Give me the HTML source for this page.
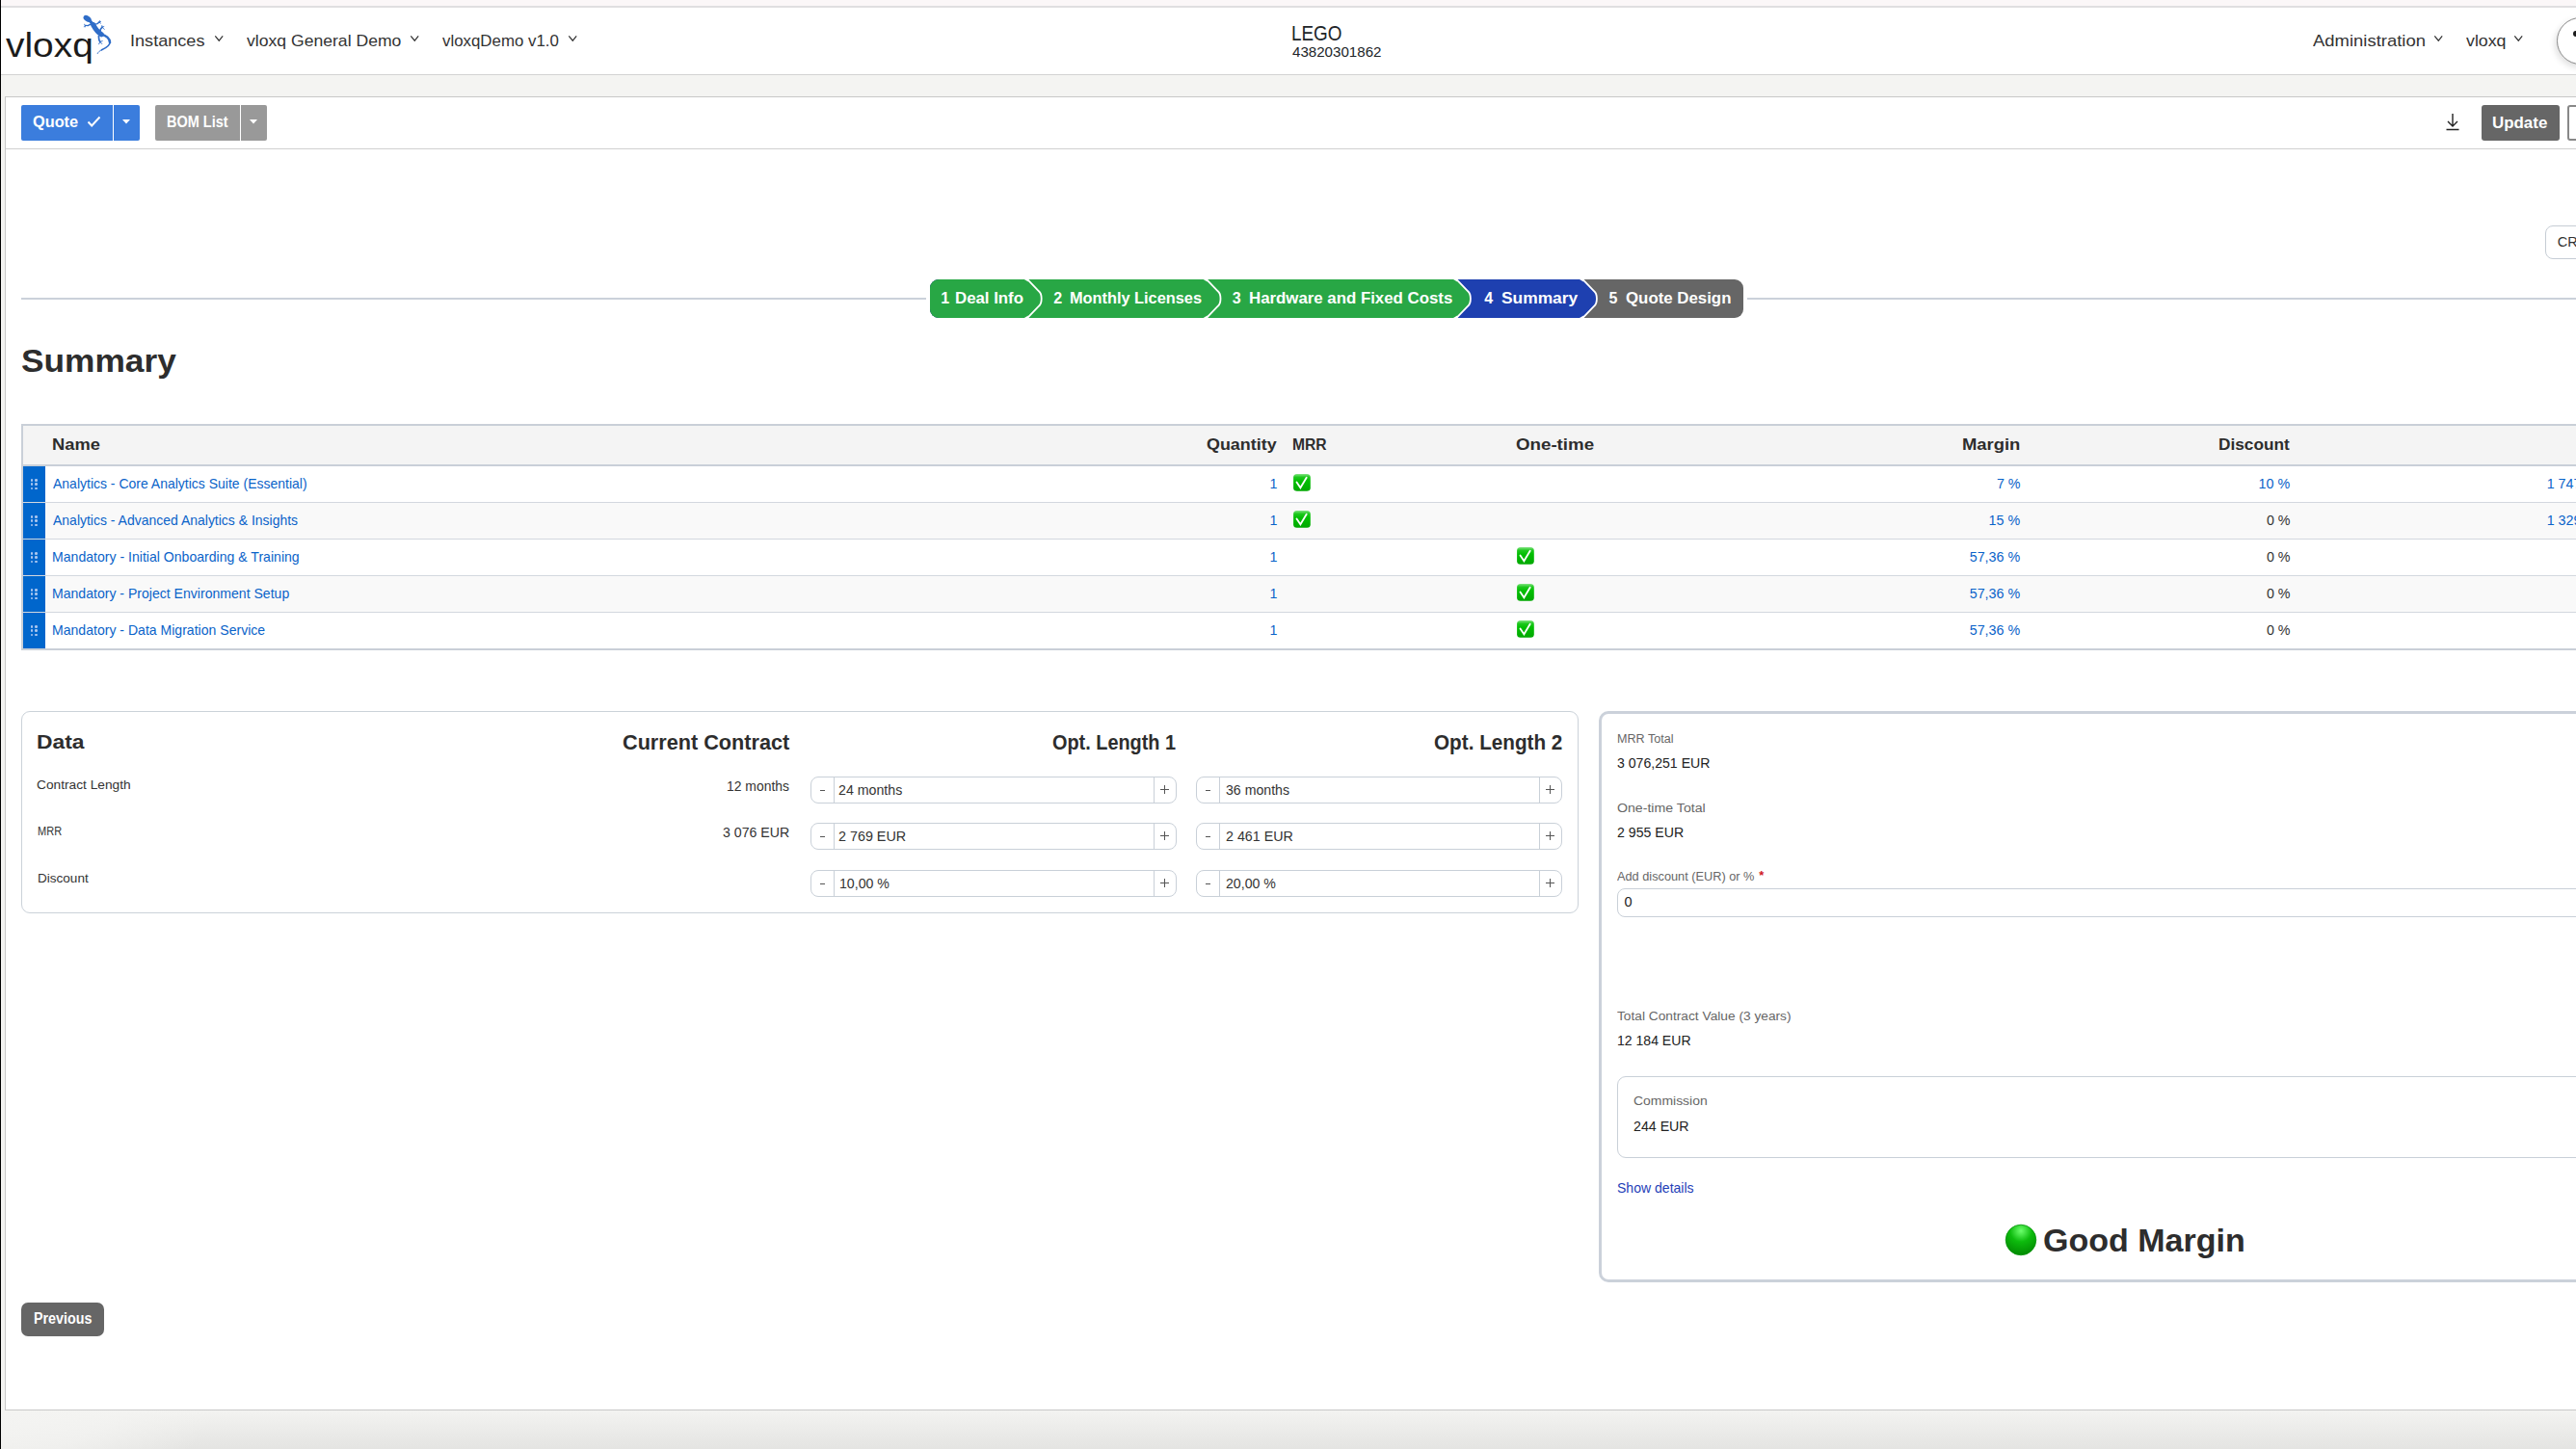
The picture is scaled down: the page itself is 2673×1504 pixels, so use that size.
<!DOCTYPE html>
<html><head><meta charset="utf-8"><title>vloxq Summary</title>
<style>
html,body{margin:0;padding:0;}
body{width:2673px;height:1504px;position:relative;overflow:hidden;background:#fff;font-family:'Liberation Sans', sans-serif;}
.t{position:absolute;white-space:nowrap;transform-origin:0 0;}
</style></head><body>
<div style="position:absolute;left:0;top:0;width:2673px;height:6px;background:#fbf7f8"></div>
<div style="position:absolute;left:0;top:6px;width:2673px;height:2px;background:#e0dfe0"></div>
<div style="position:absolute;left:0;top:77px;width:2673px;height:1px;background:#d2d2d2"></div>
<div style="position:absolute;left:0;top:78px;width:2673px;height:22px;background:#f4f4f2"></div>
<div style="position:absolute;left:0;top:78px;width:5px;height:1426px;background:#f3f3f1"></div>
<div style="position:absolute;left:0;top:1464px;width:2673px;height:40px;background:linear-gradient(180deg,#f3f3f1 0%,#e4e4e2 100%)"></div>
<div style="position:absolute;left:0;top:1464px;width:400px;height:40px;background:radial-gradient(ellipse 220px 90px at 0 0,rgba(244,244,242,1) 0%,rgba(244,244,242,0.7) 50%,rgba(244,244,242,0) 100%)"></div>
<div style="position:absolute;left:5px;top:100px;width:2700px;height:1364px;border:1px solid #c8c8c8;background:#fff;box-sizing:border-box"></div>
<div style="position:absolute;left:6px;top:154px;width:2667px;height:1px;background:#d0d0d0"></div>
<div style="position:absolute;left:0;top:0;width:1px;height:1504px;background:#000"></div>
<svg style="position:absolute;left:80px;top:10px" width="45" height="50" viewBox="80 10 45 50">
<g fill="none" stroke="#2f6dc8" stroke-linecap="round" stroke-linejoin="round">
<ellipse cx="90.6" cy="19.4" rx="4.5" ry="2.8" transform="rotate(34 90.6 19.4)" fill="#2f6dc8" stroke="none"/>
<path d="M93.2 21.4 L96.6 25.6" stroke-width="3.2"/>
<path d="M96.6 25.6 C98.6 29.2 100.6 33 105.2 35.7" stroke-width="5.2"/>
<path d="M105 35.8 C110 36.8 113.8 40 114 44" stroke-width="2.6"/>
<path d="M114 44 C114 48 109.5 50 105.5 51.8" stroke-width="1.6"/>
<path d="M105.5 51.8 C103.5 52.8 101.8 54 101.2 55.6" stroke-width="0.9"/>
<path d="M95 24.6 L91.2 26.6 L88.6 26.4" stroke-width="1.4"/>
<path d="M88.6 26.4 L87.4 25.2 M88.6 26.4 L87.2 27.4 M88.6 26.4 L88.2 28" stroke-width="0.9"/>
<path d="M97.6 25.4 L101 24.6 L103 23" stroke-width="1.4"/>
<path d="M103 23 L103.4 21.6 M103 23 L104.6 22.6 M103 23 L104.4 24.2" stroke-width="0.9"/>
<path d="M103.4 34 L104.4 30.2 L106 28.2" stroke-width="1.7"/>
<path d="M106 28.2 L105.8 26.6 M106 28.2 L107.8 27.6 M106 28.2 L108.2 30.4" stroke-width="0.9"/>
<path d="M102.4 37.6 L102.8 41.4 L103.8 43.4" stroke-width="1.7"/>
<path d="M103.8 43.4 L106.2 42.6 M103.8 43.4 L105.8 45.6 M103.8 43.4 L102.6 45.8" stroke-width="0.9"/>
</g></svg>
<svg style="position:absolute;left:222px;top:36.3px" width="10.5" height="7.5" viewBox="-1 -1 10.5 7.5"><path d="M0.3 0.3 L4.25 5.2 L8.2 0.3" fill="none" stroke="#333" stroke-width="1.2"/></svg>
<svg style="position:absolute;left:425px;top:36.3px" width="10.5" height="7.5" viewBox="-1 -1 10.5 7.5"><path d="M0.3 0.3 L4.25 5.2 L8.2 0.3" fill="none" stroke="#333" stroke-width="1.2"/></svg>
<svg style="position:absolute;left:589px;top:36.3px" width="10.5" height="7.5" viewBox="-1 -1 10.5 7.5"><path d="M0.3 0.3 L4.25 5.2 L8.2 0.3" fill="none" stroke="#333" stroke-width="1.2"/></svg>
<svg style="position:absolute;left:2524.5px;top:36.3px" width="10.5" height="7.5" viewBox="-1 -1 10.5 7.5"><path d="M0.3 0.3 L4.25 5.2 L8.2 0.3" fill="none" stroke="#333" stroke-width="1.2"/></svg>
<svg style="position:absolute;left:2607.5px;top:36.3px" width="10.5" height="7.5" viewBox="-1 -1 10.5 7.5"><path d="M0.3 0.3 L4.25 5.2 L8.2 0.3" fill="none" stroke="#333" stroke-width="1.2"/></svg>
<div style="position:absolute;left:2653px;top:18px;width:49px;height:49px;border-radius:50%;border:1px solid #8a8a8a;box-sizing:border-box;background:#fff;box-shadow:-2px 3px 6px rgba(0,0,0,0.12)"></div>
<div style="position:absolute;left:2669.5px;top:31.5px;width:6px;height:6.5px;border-radius:50%;background:#1b1b1b"></div>
<div style="position:absolute;left:22px;top:109px;width:123px;height:37px;background:#3b7ddd;border-radius:2px"></div>
<div style="position:absolute;left:117px;top:109px;width:1px;height:37px;background:#fff"></div>
<svg style="position:absolute;left:90px;top:120px" width="15" height="13" viewBox="0 0 15 13"><path d="M1.5 6.5 L5.2 10.5 L13.5 1.5" fill="none" stroke="#fff" stroke-width="1.9"/></svg>
<svg style="position:absolute;left:127px;top:123.5px" width="8" height="5" viewBox="0 0 8 5"><path d="M0 0 L8 0 L4 4.6 Z" fill="#fff"/></svg>
<div style="position:absolute;left:161px;top:109px;width:116px;height:37px;background:#999;border-radius:2px"></div>
<div style="position:absolute;left:249px;top:109px;width:1px;height:37px;background:#fff"></div>
<svg style="position:absolute;left:259px;top:124px" width="8" height="5" viewBox="0 0 8 5"><path d="M0 0 L8 0 L4 4.6 Z" fill="#fff"/></svg>
<svg style="position:absolute;left:2537px;top:117px" width="16" height="19" viewBox="0 0 16 19"><path d="M8 1 L8 14 M3 9 L8 14 L13 9 M1.5 17.5 L14.5 17.5" fill="none" stroke="#222" stroke-width="1.4"/></svg>
<div style="position:absolute;left:2574.5px;top:109px;width:81.5px;height:37px;background:#666;border-radius:3px"></div>
<div style="position:absolute;left:2664px;top:109px;width:30px;height:37px;border:2px solid #888;border-radius:3px;box-sizing:border-box;background:#fff"></div>
<div style="position:absolute;left:22px;top:309px;width:939px;height:2px;background:#cbd1da"></div>
<div style="position:absolute;left:1813px;top:309px;width:860px;height:2px;background:#cbd1da"></div>
<svg style="position:absolute;left:960px;top:285px" width="860" height="50" viewBox="960 285 860 50">
<defs><clipPath id="pill"><rect x="965" y="290" width="844" height="40" rx="9" ry="9"/></clipPath></defs>
<g clip-path="url(#pill)">
<rect x="960" y="285" width="860" height="50" fill="#666"/>
<path d="M960 285 L1641.4 285 L1641.4 289 L1654.2 302.3 C1657.8 305.2 1657.8 314.8 1654.2 317.7 L1641.4 331 L1641.4 335 L960 335 Z" fill="#1e40b0"/>
<path d="M960 285 L1510.4 285 L1510.4 289 L1523.2 302.3 C1526.8 305.2 1526.8 314.8 1523.2 317.7 L1510.4 331 L1510.4 335 L960 335 Z" fill="#28a745"/>
<path d="M1065.2 287 1065.2 289 L1078.0 302.3 C1081.6 305.2 1081.6 314.8 1078.0 317.7 L1065.2 331 L1065.2 333" fill="none" stroke="#fff" stroke-width="1.8"/><path d="M1062.2 289.6 L1066.4 289.6 L1067.0 292.6 Z M1062.2 330.4 L1066.4 330.4 L1067.0 327.4 Z" fill="#fff"/><path d="M1251.0 287 1251.0 289 L1263.8 302.3 C1267.4 305.2 1267.4 314.8 1263.8 317.7 L1251.0 331 L1251.0 333" fill="none" stroke="#fff" stroke-width="1.8"/><path d="M1248.0 289.6 L1252.2 289.6 L1252.8 292.6 Z M1248.0 330.4 L1252.2 330.4 L1252.8 327.4 Z" fill="#fff"/><path d="M1510.4 287 1510.4 289 L1523.2 302.3 C1526.8 305.2 1526.8 314.8 1523.2 317.7 L1510.4 331 L1510.4 333" fill="none" stroke="#fff" stroke-width="1.8"/><path d="M1507.4 289.6 L1511.6 289.6 L1512.2 292.6 Z M1507.4 330.4 L1511.6 330.4 L1512.2 327.4 Z" fill="#fff"/><path d="M1641.4 287 1641.4 289 L1654.2 302.3 C1657.8 305.2 1657.8 314.8 1654.2 317.7 L1641.4 331 L1641.4 333" fill="none" stroke="#fff" stroke-width="1.8"/><path d="M1638.4 289.6 L1642.6 289.6 L1643.2 292.6 Z M1638.4 330.4 L1642.6 330.4 L1643.2 327.4 Z" fill="#fff"/>
</g></svg>
<div style="position:absolute;left:2641px;top:234px;width:80px;height:35px;border:1px solid #c6cdd5;border-radius:8px;box-sizing:border-box;background:#fff"></div>
<div style="position:absolute;left:22px;top:440px;width:2700px;height:235px;border:2px solid #c9cfd8;box-sizing:border-box;background:#fff"></div>
<div style="position:absolute;left:24px;top:442px;width:2660px;height:40px;background:#f4f4f4"></div>
<div style="position:absolute;left:24px;top:482px;width:2660px;height:2px;background:#c9cfd8"></div>
<div style="position:absolute;left:47px;top:484px;width:2640px;height:37px;background:#fff"></div>
<div style="position:absolute;left:24px;top:484px;width:23px;height:37px;background:#0066cc"></div>
<div style="position:absolute;left:24px;top:521px;width:2650px;height:1px;background:#d3d8df"></div>
<div style="position:absolute;left:31.900000000000002px;top:497.09999999999997px;width:2.6px;height:2.6px;border-radius:50%;background:#a9c6ef"></div>
<div style="position:absolute;left:31.900000000000002px;top:501.4px;width:2.6px;height:2.6px;border-radius:50%;background:#a9c6ef"></div>
<div style="position:absolute;left:31.900000000000002px;top:505.8px;width:2.6px;height:2.6px;border-radius:50%;background:#a9c6ef"></div>
<div style="position:absolute;left:36.300000000000004px;top:497.09999999999997px;width:2.6px;height:2.6px;border-radius:50%;background:#a9c6ef"></div>
<div style="position:absolute;left:36.300000000000004px;top:501.4px;width:2.6px;height:2.6px;border-radius:50%;background:#a9c6ef"></div>
<div style="position:absolute;left:36.300000000000004px;top:505.8px;width:2.6px;height:2.6px;border-radius:50%;background:#a9c6ef"></div>
<svg style="position:absolute;left:1342px;top:492px" width="18" height="18" viewBox="0 0 18 18">
<defs><linearGradient id="cg1342492" x1="0" y1="0" x2="0" y2="1"><stop offset="0" stop-color="#7fe37f"/><stop offset="0.18" stop-color="#1ec81e"/><stop offset="0.4" stop-color="#03bf03"/><stop offset="1" stop-color="#02a802"/></linearGradient></defs>
<rect x="0.1" y="0.1" width="17.7" height="17.7" rx="3.6" fill="url(#cg1342492)"/>
<path d="M3.5 8.5 L7.4 14.3 L13.7 3.8" fill="none" stroke="#fff" stroke-width="1.8" stroke-linecap="round" stroke-linejoin="miter"/></svg>
<div style="position:absolute;left:47px;top:522px;width:2640px;height:37px;background:#f9f9f9"></div>
<div style="position:absolute;left:24px;top:522px;width:23px;height:37px;background:#0066cc"></div>
<div style="position:absolute;left:24px;top:559px;width:2650px;height:1px;background:#d3d8df"></div>
<div style="position:absolute;left:31.900000000000002px;top:535.1px;width:2.6px;height:2.6px;border-radius:50%;background:#a9c6ef"></div>
<div style="position:absolute;left:31.900000000000002px;top:539.4000000000001px;width:2.6px;height:2.6px;border-radius:50%;background:#a9c6ef"></div>
<div style="position:absolute;left:31.900000000000002px;top:543.8000000000001px;width:2.6px;height:2.6px;border-radius:50%;background:#a9c6ef"></div>
<div style="position:absolute;left:36.300000000000004px;top:535.1px;width:2.6px;height:2.6px;border-radius:50%;background:#a9c6ef"></div>
<div style="position:absolute;left:36.300000000000004px;top:539.4000000000001px;width:2.6px;height:2.6px;border-radius:50%;background:#a9c6ef"></div>
<div style="position:absolute;left:36.300000000000004px;top:543.8000000000001px;width:2.6px;height:2.6px;border-radius:50%;background:#a9c6ef"></div>
<svg style="position:absolute;left:1342px;top:530px" width="18" height="18" viewBox="0 0 18 18">
<defs><linearGradient id="cg1342530" x1="0" y1="0" x2="0" y2="1"><stop offset="0" stop-color="#7fe37f"/><stop offset="0.18" stop-color="#1ec81e"/><stop offset="0.4" stop-color="#03bf03"/><stop offset="1" stop-color="#02a802"/></linearGradient></defs>
<rect x="0.1" y="0.1" width="17.7" height="17.7" rx="3.6" fill="url(#cg1342530)"/>
<path d="M3.5 8.5 L7.4 14.3 L13.7 3.8" fill="none" stroke="#fff" stroke-width="1.8" stroke-linecap="round" stroke-linejoin="miter"/></svg>
<div style="position:absolute;left:47px;top:560px;width:2640px;height:37px;background:#fff"></div>
<div style="position:absolute;left:24px;top:560px;width:23px;height:37px;background:#0066cc"></div>
<div style="position:absolute;left:24px;top:597px;width:2650px;height:1px;background:#d3d8df"></div>
<div style="position:absolute;left:31.900000000000002px;top:573.1px;width:2.6px;height:2.6px;border-radius:50%;background:#a9c6ef"></div>
<div style="position:absolute;left:31.900000000000002px;top:577.4000000000001px;width:2.6px;height:2.6px;border-radius:50%;background:#a9c6ef"></div>
<div style="position:absolute;left:31.900000000000002px;top:581.8000000000001px;width:2.6px;height:2.6px;border-radius:50%;background:#a9c6ef"></div>
<div style="position:absolute;left:36.300000000000004px;top:573.1px;width:2.6px;height:2.6px;border-radius:50%;background:#a9c6ef"></div>
<div style="position:absolute;left:36.300000000000004px;top:577.4000000000001px;width:2.6px;height:2.6px;border-radius:50%;background:#a9c6ef"></div>
<div style="position:absolute;left:36.300000000000004px;top:581.8000000000001px;width:2.6px;height:2.6px;border-radius:50%;background:#a9c6ef"></div>
<svg style="position:absolute;left:1574px;top:568px" width="18" height="18" viewBox="0 0 18 18">
<defs><linearGradient id="cg1574568" x1="0" y1="0" x2="0" y2="1"><stop offset="0" stop-color="#7fe37f"/><stop offset="0.18" stop-color="#1ec81e"/><stop offset="0.4" stop-color="#03bf03"/><stop offset="1" stop-color="#02a802"/></linearGradient></defs>
<rect x="0.1" y="0.1" width="17.7" height="17.7" rx="3.6" fill="url(#cg1574568)"/>
<path d="M3.5 8.5 L7.4 14.3 L13.7 3.8" fill="none" stroke="#fff" stroke-width="1.8" stroke-linecap="round" stroke-linejoin="miter"/></svg>
<div style="position:absolute;left:47px;top:598px;width:2640px;height:37px;background:#f9f9f9"></div>
<div style="position:absolute;left:24px;top:598px;width:23px;height:37px;background:#0066cc"></div>
<div style="position:absolute;left:24px;top:635px;width:2650px;height:1px;background:#d3d8df"></div>
<div style="position:absolute;left:31.900000000000002px;top:611.1px;width:2.6px;height:2.6px;border-radius:50%;background:#a9c6ef"></div>
<div style="position:absolute;left:31.900000000000002px;top:615.4000000000001px;width:2.6px;height:2.6px;border-radius:50%;background:#a9c6ef"></div>
<div style="position:absolute;left:31.900000000000002px;top:619.8000000000001px;width:2.6px;height:2.6px;border-radius:50%;background:#a9c6ef"></div>
<div style="position:absolute;left:36.300000000000004px;top:611.1px;width:2.6px;height:2.6px;border-radius:50%;background:#a9c6ef"></div>
<div style="position:absolute;left:36.300000000000004px;top:615.4000000000001px;width:2.6px;height:2.6px;border-radius:50%;background:#a9c6ef"></div>
<div style="position:absolute;left:36.300000000000004px;top:619.8000000000001px;width:2.6px;height:2.6px;border-radius:50%;background:#a9c6ef"></div>
<svg style="position:absolute;left:1574px;top:606px" width="18" height="18" viewBox="0 0 18 18">
<defs><linearGradient id="cg1574606" x1="0" y1="0" x2="0" y2="1"><stop offset="0" stop-color="#7fe37f"/><stop offset="0.18" stop-color="#1ec81e"/><stop offset="0.4" stop-color="#03bf03"/><stop offset="1" stop-color="#02a802"/></linearGradient></defs>
<rect x="0.1" y="0.1" width="17.7" height="17.7" rx="3.6" fill="url(#cg1574606)"/>
<path d="M3.5 8.5 L7.4 14.3 L13.7 3.8" fill="none" stroke="#fff" stroke-width="1.8" stroke-linecap="round" stroke-linejoin="miter"/></svg>
<div style="position:absolute;left:47px;top:636px;width:2640px;height:37px;background:#fff"></div>
<div style="position:absolute;left:24px;top:636px;width:23px;height:37px;background:#0066cc"></div>
<div style="position:absolute;left:31.900000000000002px;top:649.1px;width:2.6px;height:2.6px;border-radius:50%;background:#a9c6ef"></div>
<div style="position:absolute;left:31.900000000000002px;top:653.4000000000001px;width:2.6px;height:2.6px;border-radius:50%;background:#a9c6ef"></div>
<div style="position:absolute;left:31.900000000000002px;top:657.8000000000001px;width:2.6px;height:2.6px;border-radius:50%;background:#a9c6ef"></div>
<div style="position:absolute;left:36.300000000000004px;top:649.1px;width:2.6px;height:2.6px;border-radius:50%;background:#a9c6ef"></div>
<div style="position:absolute;left:36.300000000000004px;top:653.4000000000001px;width:2.6px;height:2.6px;border-radius:50%;background:#a9c6ef"></div>
<div style="position:absolute;left:36.300000000000004px;top:657.8000000000001px;width:2.6px;height:2.6px;border-radius:50%;background:#a9c6ef"></div>
<svg style="position:absolute;left:1574px;top:644px" width="18" height="18" viewBox="0 0 18 18">
<defs><linearGradient id="cg1574644" x1="0" y1="0" x2="0" y2="1"><stop offset="0" stop-color="#7fe37f"/><stop offset="0.18" stop-color="#1ec81e"/><stop offset="0.4" stop-color="#03bf03"/><stop offset="1" stop-color="#02a802"/></linearGradient></defs>
<rect x="0.1" y="0.1" width="17.7" height="17.7" rx="3.6" fill="url(#cg1574644)"/>
<path d="M3.5 8.5 L7.4 14.3 L13.7 3.8" fill="none" stroke="#fff" stroke-width="1.8" stroke-linecap="round" stroke-linejoin="miter"/></svg>
<div style="position:absolute;left:22px;top:738px;width:1616px;height:210px;border:1px solid #cbd2d9;border-radius:9px;box-sizing:border-box;background:#fff"></div>
<div style="position:absolute;left:841px;top:806px;width:380px;height:28px;border:1px solid #c9d0d8;border-radius:8px;box-sizing:border-box;background:#fff"></div>
<div style="position:absolute;left:865px;top:806px;width:1px;height:28px;background:#c9d0d8"></div>
<div style="position:absolute;left:1196.5px;top:806px;width:1px;height:28px;background:#c9d0d8"></div>
<div style="position:absolute;left:851px;top:819.6px;width:5px;height:1.2px;background:#555"></div>
<div style="position:absolute;left:1204.3px;top:818.75px;width:9px;height:1.1px;background:#555"></div>
<div style="position:absolute;left:1208.25px;top:814.8px;width:1.1px;height:9px;background:#555"></div>
<div style="position:absolute;left:1241px;top:806px;width:380px;height:28px;border:1px solid #c9d0d8;border-radius:8px;box-sizing:border-box;background:#fff"></div>
<div style="position:absolute;left:1265px;top:806px;width:1px;height:28px;background:#c9d0d8"></div>
<div style="position:absolute;left:1596.5px;top:806px;width:1px;height:28px;background:#c9d0d8"></div>
<div style="position:absolute;left:1251px;top:819.6px;width:5px;height:1.2px;background:#555"></div>
<div style="position:absolute;left:1604.3px;top:818.75px;width:9px;height:1.1px;background:#555"></div>
<div style="position:absolute;left:1608.25px;top:814.8px;width:1.1px;height:9px;background:#555"></div>
<div style="position:absolute;left:841px;top:854px;width:380px;height:28px;border:1px solid #c9d0d8;border-radius:8px;box-sizing:border-box;background:#fff"></div>
<div style="position:absolute;left:865px;top:854px;width:1px;height:28px;background:#c9d0d8"></div>
<div style="position:absolute;left:1196.5px;top:854px;width:1px;height:28px;background:#c9d0d8"></div>
<div style="position:absolute;left:851px;top:867.6px;width:5px;height:1.2px;background:#555"></div>
<div style="position:absolute;left:1204.3px;top:866.75px;width:9px;height:1.1px;background:#555"></div>
<div style="position:absolute;left:1208.25px;top:862.8px;width:1.1px;height:9px;background:#555"></div>
<div style="position:absolute;left:1241px;top:854px;width:380px;height:28px;border:1px solid #c9d0d8;border-radius:8px;box-sizing:border-box;background:#fff"></div>
<div style="position:absolute;left:1265px;top:854px;width:1px;height:28px;background:#c9d0d8"></div>
<div style="position:absolute;left:1596.5px;top:854px;width:1px;height:28px;background:#c9d0d8"></div>
<div style="position:absolute;left:1251px;top:867.6px;width:5px;height:1.2px;background:#555"></div>
<div style="position:absolute;left:1604.3px;top:866.75px;width:9px;height:1.1px;background:#555"></div>
<div style="position:absolute;left:1608.25px;top:862.8px;width:1.1px;height:9px;background:#555"></div>
<div style="position:absolute;left:841px;top:903px;width:380px;height:28px;border:1px solid #c9d0d8;border-radius:8px;box-sizing:border-box;background:#fff"></div>
<div style="position:absolute;left:865px;top:903px;width:1px;height:28px;background:#c9d0d8"></div>
<div style="position:absolute;left:1196.5px;top:903px;width:1px;height:28px;background:#c9d0d8"></div>
<div style="position:absolute;left:851px;top:916.6px;width:5px;height:1.2px;background:#555"></div>
<div style="position:absolute;left:1204.3px;top:915.75px;width:9px;height:1.1px;background:#555"></div>
<div style="position:absolute;left:1208.25px;top:911.8px;width:1.1px;height:9px;background:#555"></div>
<div style="position:absolute;left:1241px;top:903px;width:380px;height:28px;border:1px solid #c9d0d8;border-radius:8px;box-sizing:border-box;background:#fff"></div>
<div style="position:absolute;left:1265px;top:903px;width:1px;height:28px;background:#c9d0d8"></div>
<div style="position:absolute;left:1596.5px;top:903px;width:1px;height:28px;background:#c9d0d8"></div>
<div style="position:absolute;left:1251px;top:916.6px;width:5px;height:1.2px;background:#555"></div>
<div style="position:absolute;left:1604.3px;top:915.75px;width:9px;height:1.1px;background:#555"></div>
<div style="position:absolute;left:1608.25px;top:911.8px;width:1.1px;height:9px;background:#555"></div>
<div style="position:absolute;left:1659px;top:738px;width:1100px;height:593px;border:3px solid #cbd1da;border-radius:10px;box-sizing:border-box;background:#fff"></div>
<div style="position:absolute;left:1678px;top:922px;width:1100px;height:30px;border:1px solid #c9d0d8;border-radius:8px;box-sizing:border-box;background:#fff"></div>
<div style="position:absolute;left:1678px;top:1117px;width:1100px;height:85px;border:1px solid #c9d0d8;border-radius:9px;box-sizing:border-box;background:#fff"></div>
<svg style="position:absolute;left:2080px;top:1270px" width="34" height="34" viewBox="0 0 34 34">
<defs><radialGradient id="gm" cx="0.5" cy="0.2" r="0.8"><stop offset="0" stop-color="#6cff6c"/><stop offset="0.45" stop-color="#0dbb0d"/><stop offset="1" stop-color="#028a02"/></radialGradient></defs>
<circle cx="17" cy="17" r="15.8" fill="url(#gm)" stroke="#05930a" stroke-width="0.8"/></svg>
<div style="position:absolute;left:22px;top:1352px;width:86px;height:35px;background:#666;border-radius:7px"></div>
<div id="t0" class="t" style="left:5.70px;top:29.00px;font-size:35px;line-height:35px;font-weight:400;color:#1b1b1b;transform:scaleX(1.1114);">vloxq</div>
<div id="t1" class="t" style="left:135.23px;top:34.00px;font-size:16.1px;line-height:16.1px;font-weight:400;color:#333;transform:scaleX(1.1247);">Instances</div>
<div id="t2" class="t" style="left:256.04px;top:34.00px;font-size:16.1px;line-height:16.1px;font-weight:400;color:#333;transform:scaleX(1.0931);">vloxq General Demo</div>
<div id="t3" class="t" style="left:458.62px;top:34.00px;font-size:16.1px;line-height:16.1px;font-weight:400;color:#333;transform:scaleX(1.0473);">vloxqDemo v1.0</div>
<div id="t4" class="t" style="left:1340.47px;top:25.00px;font-size:21.5px;line-height:21.5px;font-weight:400;color:#212529;transform:scaleX(0.8775);">LEGO</div>
<div id="t5" class="t" style="left:1341.38px;top:46.00px;font-size:15.3px;line-height:15.3px;font-weight:400;color:#212529;transform:scaleX(0.9881);">43820301862</div>
<div id="t6" class="t" style="left:2399.75px;top:34.00px;font-size:16.1px;line-height:16.1px;font-weight:400;color:#333;transform:scaleX(1.1467);">Administration</div>
<div id="t7" class="t" style="left:2559.11px;top:34.00px;font-size:16.1px;line-height:16.1px;font-weight:400;color:#333;transform:scaleX(1.1050);">vloxq</div>
<div id="t8" class="t" style="left:34.49px;top:119.00px;font-size:16px;line-height:16px;font-weight:700;color:#fff;transform:scaleX(1.0192);">Quote</div>
<div id="t9" class="t" style="left:173.35px;top:119.00px;font-size:16px;line-height:16px;font-weight:700;color:#fff;transform:scaleX(0.9048);">BOM List</div>
<div id="t10" class="t" style="left:2586.35px;top:120.00px;font-size:16px;line-height:16px;font-weight:700;color:#fff;transform:scaleX(1.0570);">Update</div>
<div id="t11" class="t" style="left:976.35px;top:302.00px;font-size:16px;line-height:16px;font-weight:700;color:#fff;">1</div>
<div id="t12" class="t" style="left:990.54px;top:302.00px;font-size:16px;line-height:16px;font-weight:700;color:#fff;transform:scaleX(1.0506);">Deal Info</div>
<div id="t13" class="t" style="left:1093.13px;top:302.00px;font-size:16px;line-height:16px;font-weight:700;color:#fff;">2</div>
<div id="t14" class="t" style="left:1110.07px;top:302.00px;font-size:16px;line-height:16px;font-weight:700;color:#fff;transform:scaleX(1.0204);">Monthly Licenses</div>
<div id="t15" class="t" style="left:1278.72px;top:302.00px;font-size:16px;line-height:16px;font-weight:700;color:#fff;">3</div>
<div id="t16" class="t" style="left:1296.24px;top:302.00px;font-size:16px;line-height:16px;font-weight:700;color:#fff;transform:scaleX(1.0513);">Hardware and Fixed Costs</div>
<div id="t17" class="t" style="left:1540.36px;top:302.00px;font-size:16px;line-height:16px;font-weight:700;color:#fff;">4</div>
<div id="t18" class="t" style="left:1557.98px;top:302.00px;font-size:16px;line-height:16px;font-weight:700;color:#fff;transform:scaleX(1.0858);">Summary</div>
<div id="t19" class="t" style="left:1669.59px;top:302.00px;font-size:16px;line-height:16px;font-weight:700;color:#fff;">5</div>
<div id="t20" class="t" style="left:1687.36px;top:302.00px;font-size:16px;line-height:16px;font-weight:700;color:#fff;transform:scaleX(1.0522);">Quote Design</div>
<div id="t21" class="t" style="left:2653.82px;top:244.00px;font-size:14.5px;line-height:14.5px;font-weight:400;color:#333;">CR</div>
<div id="t22" class="t" style="left:22.09px;top:358.00px;font-size:33.4px;line-height:33.4px;font-weight:700;color:#2d2d2d;transform:scaleX(1.0571);">Summary</div>
<div id="t23" class="t" style="left:54.37px;top:453.00px;font-size:17.2px;line-height:17.2px;font-weight:700;color:#2d2d2d;transform:scaleX(1.0644);">Name</div>
<div id="t24" class="t" style="left:1252.15px;top:453.00px;font-size:17.2px;line-height:17.2px;font-weight:700;color:#2d2d2d;transform:scaleX(1.0414);">Quantity</div>
<div id="t25" class="t" style="left:1341.04px;top:453.00px;font-size:17.2px;line-height:17.2px;font-weight:700;color:#2d2d2d;transform:scaleX(0.9102);">MRR</div>
<div id="t26" class="t" style="left:1572.90px;top:453.00px;font-size:17.2px;line-height:17.2px;font-weight:700;color:#2d2d2d;transform:scaleX(1.0886);">One-time</div>
<div id="t27" class="t" style="left:2036.37px;top:453.00px;font-size:17.2px;line-height:17.2px;font-weight:700;color:#2d2d2d;transform:scaleX(1.0710);">Margin</div>
<div id="t28" class="t" style="left:2302.25px;top:453.00px;font-size:17.2px;line-height:17.2px;font-weight:700;color:#2d2d2d;transform:scaleX(1.0026);">Discount</div>
<div id="t29" class="t" style="left:55.04px;top:495.00px;font-size:14.3px;line-height:14.3px;font-weight:400;color:#0a63c9;transform:scaleX(0.9785);">Analytics - Core Analytics Suite (Essential)</div>
<div id="t30" class="t" style="left:1317.40px;top:495.00px;font-size:14.3px;line-height:14.3px;font-weight:400;color:#0a63c9;">1</div>
<div id="t31" class="t" style="left:2642.65px;top:495.00px;font-size:14.3px;line-height:14.3px;font-weight:400;color:#0a63c9;">1 747</div>
<div id="t32" class="t" style="left:2071.94px;top:495.00px;font-size:14.3px;line-height:14.3px;font-weight:400;color:#0a63c9;">7 %</div>
<div id="t33" class="t" style="left:2343.59px;top:495.00px;font-size:14.3px;line-height:14.3px;font-weight:400;color:#0a63c9;">10 %</div>
<div id="t34" class="t" style="left:55.04px;top:533.00px;font-size:14.3px;line-height:14.3px;font-weight:400;color:#0a63c9;transform:scaleX(0.9779);">Analytics - Advanced Analytics &amp; Insights</div>
<div id="t35" class="t" style="left:1317.40px;top:533.00px;font-size:14.3px;line-height:14.3px;font-weight:400;color:#0a63c9;">1</div>
<div id="t36" class="t" style="left:2642.65px;top:533.00px;font-size:14.3px;line-height:14.3px;font-weight:400;color:#0a63c9;">1 329</div>
<div id="t37" class="t" style="left:2063.59px;top:533.00px;font-size:14.3px;line-height:14.3px;font-weight:400;color:#0a63c9;">15 %</div>
<div id="t38" class="t" style="left:2351.94px;top:533.00px;font-size:14.3px;line-height:14.3px;font-weight:400;color:#333;">0 %</div>
<div id="t39" class="t" style="left:54.27px;top:571.00px;font-size:14.3px;line-height:14.3px;font-weight:400;color:#0a63c9;transform:scaleX(0.9848);">Mandatory - Initial Onboarding &amp; Training</div>
<div id="t40" class="t" style="left:1317.40px;top:571.00px;font-size:14.3px;line-height:14.3px;font-weight:400;color:#0a63c9;">1</div>
<div id="t41" class="t" style="left:2043.69px;top:571.00px;font-size:14.3px;line-height:14.3px;font-weight:400;color:#0a63c9;">57,36 %</div>
<div id="t42" class="t" style="left:2351.94px;top:571.00px;font-size:14.3px;line-height:14.3px;font-weight:400;color:#333;">0 %</div>
<div id="t43" class="t" style="left:54.27px;top:609.00px;font-size:14.3px;line-height:14.3px;font-weight:400;color:#0a63c9;transform:scaleX(0.9836);">Mandatory - Project Environment Setup</div>
<div id="t44" class="t" style="left:1317.40px;top:609.00px;font-size:14.3px;line-height:14.3px;font-weight:400;color:#0a63c9;">1</div>
<div id="t45" class="t" style="left:2043.69px;top:609.00px;font-size:14.3px;line-height:14.3px;font-weight:400;color:#0a63c9;">57,36 %</div>
<div id="t46" class="t" style="left:2351.94px;top:609.00px;font-size:14.3px;line-height:14.3px;font-weight:400;color:#333;">0 %</div>
<div id="t47" class="t" style="left:54.27px;top:647.00px;font-size:14.3px;line-height:14.3px;font-weight:400;color:#0a63c9;transform:scaleX(0.9834);">Mandatory - Data Migration Service</div>
<div id="t48" class="t" style="left:1317.40px;top:647.00px;font-size:14.3px;line-height:14.3px;font-weight:400;color:#0a63c9;">1</div>
<div id="t49" class="t" style="left:2043.69px;top:647.00px;font-size:14.3px;line-height:14.3px;font-weight:400;color:#0a63c9;">57,36 %</div>
<div id="t50" class="t" style="left:2351.94px;top:647.00px;font-size:14.3px;line-height:14.3px;font-weight:400;color:#333;">0 %</div>
<div id="t51" class="t" style="left:37.80px;top:760.00px;font-size:20.8px;line-height:20.8px;font-weight:700;color:#2d2d2d;transform:scaleX(1.0978);">Data</div>
<div id="t52" class="t" style="left:646.35px;top:760.00px;font-size:21.8px;line-height:21.8px;font-weight:700;color:#2d2d2d;transform:scaleX(0.9933);">Current Contract</div>
<div id="t53" class="t" style="left:1091.85px;top:760.00px;font-size:21.8px;line-height:21.8px;font-weight:700;color:#2d2d2d;transform:scaleX(0.9119);">Opt. Length 1</div>
<div id="t54" class="t" style="left:1487.72px;top:760.00px;font-size:21.8px;line-height:21.8px;font-weight:700;color:#2d2d2d;transform:scaleX(0.9495);">Opt. Length 2</div>
<div id="t55" class="t" style="left:38.36px;top:809.00px;font-size:12.3px;line-height:12.3px;font-weight:400;color:#333;transform:scaleX(1.1154);">Contract Length</div>
<div id="t56" class="t" style="left:38.55px;top:857.00px;font-size:12.3px;line-height:12.3px;font-weight:400;color:#333;transform:scaleX(0.8961);">MRR</div>
<div id="t57" class="t" style="left:39.05px;top:906.00px;font-size:12.3px;line-height:12.3px;font-weight:400;color:#333;transform:scaleX(1.1016);">Discount</div>
<div id="t58" class="t" style="left:754.36px;top:809.00px;font-size:14.5px;line-height:14.5px;font-weight:400;color:#333;transform:scaleX(0.9590);">12 months</div>
<div id="t59" class="t" style="left:750.39px;top:857.00px;font-size:14.5px;line-height:14.5px;font-weight:400;color:#333;transform:scaleX(0.9742);">3 076 EUR</div>
<div id="t60" class="t" style="left:870.47px;top:813.00px;font-size:14.5px;line-height:14.5px;font-weight:400;color:#333;transform:scaleX(0.9790);">24 months</div>
<div id="t61" class="t" style="left:870.42px;top:861.00px;font-size:14.5px;line-height:14.5px;font-weight:400;color:#333;transform:scaleX(0.9888);">2 769 EUR</div>
<div id="t62" class="t" style="left:871.35px;top:910.00px;font-size:14.5px;line-height:14.5px;font-weight:400;color:#333;transform:scaleX(0.9756);">10,00 %</div>
<div id="t63" class="t" style="left:1271.61px;top:813.00px;font-size:14.5px;line-height:14.5px;font-weight:400;color:#333;transform:scaleX(0.9744);">36 months</div>
<div id="t64" class="t" style="left:1271.62px;top:861.00px;font-size:14.5px;line-height:14.5px;font-weight:400;color:#333;transform:scaleX(0.9858);">2 461 EUR</div>
<div id="t65" class="t" style="left:1271.64px;top:910.00px;font-size:14.5px;line-height:14.5px;font-weight:400;color:#333;transform:scaleX(0.9744);">20,00 %</div>
<div id="t66" class="t" style="left:1677.69px;top:761.00px;font-size:12.5px;line-height:12.5px;font-weight:400;color:#666;transform:scaleX(1.0072);">MRR Total</div>
<div id="t67" class="t" style="left:1677.90px;top:785.00px;font-size:14.5px;line-height:14.5px;font-weight:400;color:#222;transform:scaleX(0.9722);">3 076,251 EUR</div>
<div id="t68" class="t" style="left:1677.86px;top:833.00px;font-size:12.5px;line-height:12.5px;font-weight:400;color:#666;transform:scaleX(1.1315);">One-time Total</div>
<div id="t69" class="t" style="left:1677.91px;top:857.00px;font-size:14.5px;line-height:14.5px;font-weight:400;color:#222;transform:scaleX(0.9741);">2 955 EUR</div>
<div id="t70" class="t" style="left:1678.28px;top:904.00px;font-size:12.5px;line-height:12.5px;font-weight:400;color:#666;transform:scaleX(1.0200);">Add discount (EUR) or %</div>
<div id="t71" class="t" style="left:1825.13px;top:902.00px;font-size:13px;line-height:13px;font-weight:700;color:#d0191f;">*</div>
<div id="t72" class="t" style="left:1685.39px;top:929.00px;font-size:14.5px;line-height:14.5px;font-weight:400;color:#222;">0</div>
<div id="t73" class="t" style="left:1678.22px;top:1049.00px;font-size:12.5px;line-height:12.5px;font-weight:400;color:#666;transform:scaleX(1.0981);">Total Contract Value (3 years)</div>
<div id="t74" class="t" style="left:1677.66px;top:1073.00px;font-size:14.5px;line-height:14.5px;font-weight:400;color:#222;transform:scaleX(0.9688);">12 184 EUR</div>
<div id="t75" class="t" style="left:1694.86px;top:1137.00px;font-size:12.5px;line-height:12.5px;font-weight:400;color:#666;transform:scaleX(1.1151);">Commission</div>
<div id="t76" class="t" style="left:1694.98px;top:1162.00px;font-size:14.5px;line-height:14.5px;font-weight:400;color:#222;transform:scaleX(0.9792);">244 EUR</div>
<div id="t77" class="t" style="left:1677.85px;top:1226.00px;font-size:14.5px;line-height:14.5px;font-weight:400;color:#1f41b8;transform:scaleX(0.9686);">Show details</div>
<div id="t78" class="t" style="left:2120.16px;top:1271.00px;font-size:33px;line-height:33px;font-weight:700;color:#2d2d2d;transform:scaleX(1.0310);">Good Margin</div>
<div id="t79" class="t" style="left:34.90px;top:1361.00px;font-size:16px;line-height:16px;font-weight:700;color:#fff;transform:scaleX(0.8936);">Previous</div>
</body></html>
